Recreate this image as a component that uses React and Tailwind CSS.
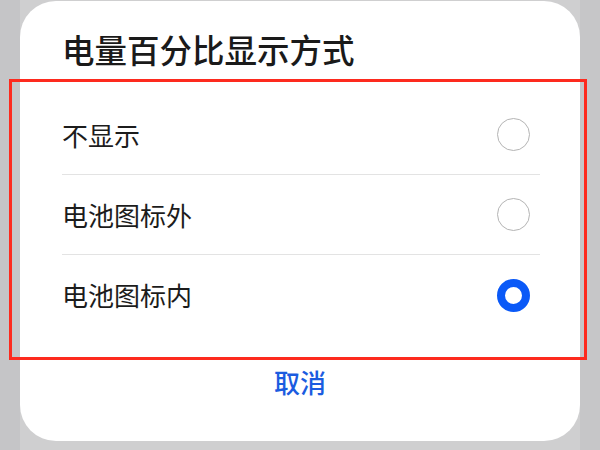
const options = [
  { id: "hide", label: "不显示" },
  { id: "outside", label: "电池图标外" },
  { id: "inside", label: "电池图标内" },
];

const Radio = ({ checked }) =>
  checked ? (
    <span className="block w-[33px] h-[33px] rounded-full border-[8px] border-[#0a59f7] bg-white" />
  ) : (
    <span className="block w-[33px] h-[33px] rounded-full border-[1.5px] border-[#b4b4b4] bg-white" />
  );

export default function App() {
  const selected = "inside";

  return (
    <div className="relative w-[600px] h-[450px] overflow-hidden bg-[#c7c7c9] font-['Noto_Sans_CJK_SC',sans-serif]">
      <div className="flex h-full">
        <div className="w-[20px] bg-[#c5c5c7]" />
        <div className="flex flex-col w-[560px] bg-[#cfcfd0]">
          <div className="mt-[1px] h-[440px] rounded-[36px] bg-white flex flex-col">
            <h1 className="pl-[42px] pt-[28px] pb-[26px] text-[32.5px] leading-[40px] font-medium text-[#1a1a1a]">
              电量百分比显示方式
            </h1>

            <div className="flex flex-col">
              {options.map((opt, i) => (
                <div
                  key={opt.id}
                  className={
                    i < options.length - 1
                      ? "ml-[42px] mr-[40px] h-[80px] flex items-center justify-between border-b border-[#e3e3e3]"
                      : "ml-[42px] mr-[40px] h-[80px] flex items-center justify-between"
                  }
                >
                  <span className="text-[26px] leading-[32px] text-[#1c1c1c]">{opt.label}</span>
                  <span className="mr-[10px]">
                    <Radio checked={opt.id === selected} />
                  </span>
                </div>
              ))}
            </div>

            <div className="h-[94px] flex items-center justify-center">
              <span className="text-[26px] leading-[32px] font-medium text-[#1b5ce0]">取消</span>
            </div>
          </div>
        </div>
        <div className="w-[20px] bg-[#c6c6c8]" />
      </div>

      {/* annotation frame */}
      <div className="absolute left-[9px] top-[79px] w-[578px] h-[281px] border-[3px] border-[#fd2a1e] pointer-events-none" />
    </div>
  );
}
